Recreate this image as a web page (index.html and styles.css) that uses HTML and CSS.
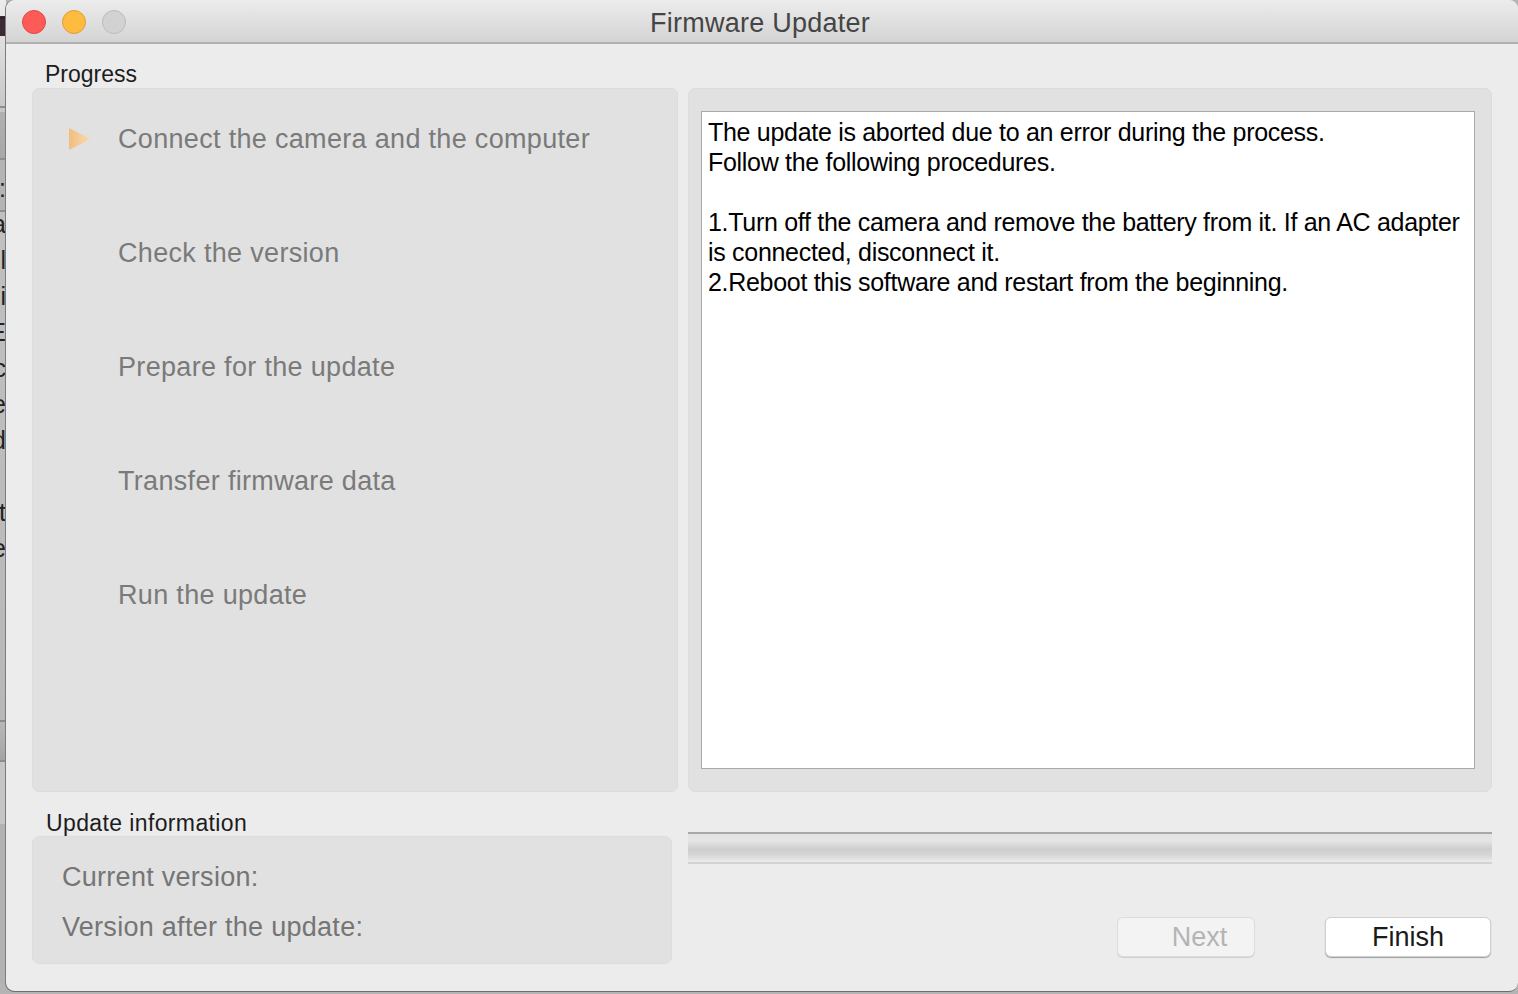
FILE: index.html
```html
<!DOCTYPE html>
<html lang="en">
<head>
    <meta charset="UTF-8">
    <title>Firmware Updater</title>
    <link rel="stylesheet" href="styles.css">
</head>
<body>
    <div class="desktop">
        <div class="behind-top"><div class="behind-title">T</div></div>
        <div class="behind-toolbar"></div>
        <div class="behind-band">
            <div class="behind-text">:</div>
            <div class="behind-text">a</div>
            <div class="behind-text">l</div>
            <div class="behind-text">i</div>
            <div class="behind-text">E</div>
            <div class="behind-text">c</div>
            <div class="behind-text">e</div>
            <div class="behind-text">d</div>
            <div class="behind-text">&nbsp;</div>
            <div class="behind-text">t</div>
            <div class="behind-text">e</div>
        </div>
        <div class="behind-strip"></div>
        <div class="behind-light"></div>
        <div class="behind-dark"></div>
    </div>
    <div class="window">
        <header class="titlebar">
            <div class="lights">
                <span class="light light-close"></span>
                <span class="light light-min"></span>
                <span class="light light-zoom"></span>
            </div>
            <h1>Firmware Updater</h1>
        </header>
        <div class="content">
            <section class="left-col">
                <h2 class="group-label">Progress</h2>
                <div class="panel steps">
                    <div class="step">
                        <svg class="step-arrow" width="24" height="24" viewBox="0 0 24 24">
                            <defs>
                                <linearGradient id="arrowFill" x1="0" y1="0" x2="1" y2="0">
                                    <stop offset="0" stop-color="#f3bd7e"/>
                                    <stop offset="1" stop-color="#f7dcb8"/>
                                </linearGradient>
                            </defs>
                            <path d="M1 1 L23 12 L1 23 Z" fill="url(#arrowFill)"/>
                        </svg>
                        Connect the camera and the computer
                    </div>
                    <div class="step">Check the version</div>
                    <div class="step">Prepare for the update</div>
                    <div class="step">Transfer firmware data</div>
                    <div class="step">Run the update</div>
                </div>
            </section>
            <section class="right-col">
                <div class="panel message-panel">
                    <div class="message">
                        The update is aborted due to an error during the process.<br>
                        Follow the following procedures.<br>
                        <br>
                        1.Turn off the camera and remove the battery from it. If an AC adapter<br>
                        is connected, disconnect it.<br>
                        2.Reboot this software and restart from the beginning.
                    </div>
                </div>
            </section>
            <section class="info-col">
                <h2 class="group-label">Update information</h2>
                <div class="panel info">
                    <div>Current version:</div>
                    <div>Version after the update:</div>
                </div>
            </section>
            <section class="action-col">
                <div class="progress-bar"></div>
                <div class="buttons">
                    <button class="btn btn-next" disabled>Next</button>
                    <button class="btn btn-finish">Finish</button>
                </div>
            </section>
        </div>
    </div>
</body>
</html>
```

FILE: styles.css
```css
html, body {
    margin: 0;
    padding: 0;
    height: 994px;
    overflow: hidden;
}
body {
    display: flex;
    background: #b4b4b4;
    font-family: "Liberation Sans", Arial, sans-serif;
}

/* the other window showing behind, only a sliver of it is visible */
.desktop {
    width: 6px;
    flex-shrink: 0;
    overflow: hidden;
    font-size: 25px;
    color: #222;
}
.behind-top {
    height: 108px;
    box-sizing: border-box;
    padding-top: 16px;
    background: linear-gradient(180deg, #ececec, #c8c8c8);
    border-bottom: 2px solid #8e8e8e;
}
.behind-title {
    width: 6px;
    height: 20px;
    overflow: hidden;
    line-height: 20px;
    color: #2a2028;
    background: #3a2a34;
}
.behind-toolbar {
    height: 62px;
    box-sizing: border-box;
    background: linear-gradient(180deg, #c6c6c6 0, #c6c6c6 4px, #b0b0b0 4px, #a8a8a8 50px, #8e8e8e 50px, #8e8e8e 52px, #b4b4b4 52px);
}
.behind-band {
    height: 550px;
    background: linear-gradient(180deg, #b4b4b4 0, #b4b4b4 40px, #909090 40px, #909090 42px, #c0c0c0 42px, #b8b8b8 100%);
}
.behind-text {
    width: 6px;
    height: 36px;
    line-height: 36px;
    direction: rtl;
    overflow: hidden;
}
.behind-strip {
    height: 42px;
    box-sizing: border-box;
    background: linear-gradient(180deg, #b8b8b8, #a4a4a4);
    border-top: 2px solid #8c8c8c;
    border-bottom: 2px solid #8c8c8c;
}
.behind-light {
    height: 62px;
    background: #c6c6c6;
}
.behind-dark {
    height: 160px;
    background: #b2b2b4;
}

.window {
    width: 1512px;
    height: 992px;
    background: #ececec;
    border-radius: 9px;
    border-bottom: 1px solid #6e6e6e;
    box-sizing: border-box;
    overflow: hidden;
    box-shadow: -1px 0 0 #7c7c7c;
}
.titlebar {
    height: 44px;
    box-sizing: border-box;
    padding-top: 5px;
    display: flex;
    align-items: center;
    justify-content: center;
    position: relative;
    background: linear-gradient(180deg, #ececec, #d4d4d4);
    border-bottom: 2px solid #b0b0b0;
}
.titlebar h1 {
    margin: 0 4px 0 0;
    font-size: 27px;
    font-weight: normal;
    letter-spacing: 0.25px;
    color: #454545;
}
.lights {
    position: absolute;
    left: 16px;
    top: 10px;
    display: flex;
    gap: 16px;
}
.light {
    width: 24px;
    height: 24px;
    border-radius: 50%;
    box-sizing: border-box;
    border: 1px solid;
}
.light-close {
    background: #fc5b57;
    border-color: #df4744;
}
.light-min {
    background: #fdbb40;
    border-color: #de9f34;
}
.light-zoom {
    background: #d2d2d2;
    border-color: #bcbcbc;
}
.content {
    display: grid;
    grid-template-columns: 646px 804px;
    grid-template-rows: 748px 200px;
    column-gap: 10px;
    padding-left: 26px;
}
.group-label {
    margin: 0;
    padding-left: 13px;
    height: 44px;
    line-height: 61px;
    font-size: 23px;
    font-weight: normal;
    color: #1c1c1c;
    white-space: nowrap;
}
.panel {
    box-sizing: border-box;
    background: #e1e1e1;
    border: 1px solid #dcdcdc;
    border-radius: 7px;
}
.steps {
    height: 704px;
    padding: 33px 0 0 85px;
    display: flex;
    flex-direction: column;
    gap: 80px;
    font-size: 27px;
    letter-spacing: 0.32px;
    color: #7a7a7a;
}
.step {
    height: 34px;
    line-height: 34px;
    position: relative;
    white-space: nowrap;
}
.step-arrow {
    position: absolute;
    left: -50px;
    top: 5px;
    filter: blur(0.5px);
}
.message-panel {
    height: 704px;
    margin-top: 44px;
    padding: 22px 16px 0 12px;
}
.message {
    box-sizing: border-box;
    height: 658px;
    padding: 5px 6px;
    background: #fff;
    border: 1px solid #a9a9a9;
    font-size: 25px;
    letter-spacing: -0.3px;
    line-height: 30px;
    color: #000;
    white-space: nowrap;
}
.info-col {
    width: 640px;
}
.info {
    height: 128px;
    margin-top: 0;
    padding: 24px 0 0 29px;
    font-size: 27px;
    letter-spacing: 0.28px;
    line-height: 32px;
    color: #757575;
    display: flex;
    flex-direction: column;
    gap: 18px;
}
.info-col .group-label {
    padding-left: 14px;
    line-height: 63px;
    letter-spacing: 0.38px;
}
.action-col {
    padding-top: 40px;
}
.progress-bar {
    height: 32px;
    box-sizing: border-box;
    border-top: 2px solid #a8a8a8;
    border-bottom: 2px solid #d2d2d2;
    background: linear-gradient(180deg, #e2e2e2 0%, #e6e6e6 22%, #cdcdcd 55%, #d8d8d8 78%, #ececec 100%);
}
.buttons {
    display: flex;
    justify-content: flex-end;
    gap: 70px;
    margin-top: 53px;
    padding-right: 1px;
}
.btn {
    height: 40px;
    padding: 0;
    border-radius: 6px;
    font-family: inherit;
    font-size: 27px;
    line-height: 38px;
    box-sizing: border-box;
}
.btn-next {
    width: 138px;
    padding-left: 27px;
    color: #b4b4b4;
    background: #f3f3f3;
    border: 1px solid #dcdcdc;
    box-shadow: 0 1px 0 #d0d0d0;
}
.btn-finish {
    width: 166px;
    color: #1a1a1a;
    background: #fff;
    border: 1px solid #d0d0d0;
    box-shadow: 0 1px 1px #a0a0a0;
}
```
